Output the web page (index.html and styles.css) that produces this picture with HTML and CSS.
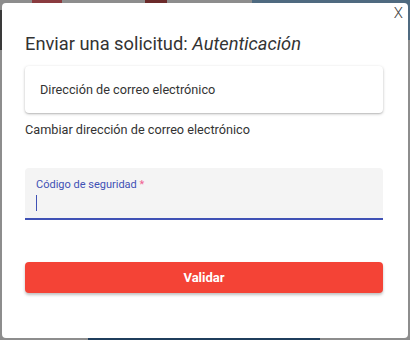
FILE: index.html
```html
<!DOCTYPE html>
<html lang="es">
<head>
<meta charset="utf-8">
<link rel="stylesheet" href="styles.css">
</head>
<body>
<div class="backdrop">
  <div class="bg-red"></div>
  <div class="bg-red2"></div>
  <div class="bg-blue"></div>
  <div class="bg-dark"></div>
  <div class="bg-bottom"></div>
</div>
<div class="modal">
  <button class="close">X</button>
  <h1 class="title">Enviar una solicitud: <em>Autenticación</em></h1>
  <div class="card">Dirección de correo electrónico</div>
  <a class="change">Cambiar dirección de correo electrónico</a>
  <div class="field">
    <label class="label">Código de seguridad <span class="req">*</span></label>
    <span class="caret"></span>
  </div>
  <button class="submit">Validar</button>
</div>
</body>
</html>
```
FILE: styles.css
```css
html, body { margin: 0; padding: 0; }
body {
  width: 410px;
  height: 340px;
  background: #8d8d8d;
  font-family: Roboto, "Liberation Sans", Arial, sans-serif;
  overflow: hidden;
  position: relative;
}
.backdrop { position: absolute; inset: 0; }
.bg-red { position: absolute; left: 32px; top: 0; width: 30px; height: 4px; background: #8a3b3f; }
.bg-red2 { position: absolute; left: 145px; top: 0; width: 22px; height: 4px; background: #6b2a2a; }
.bg-blue { position: absolute; left: 252px; top: 0; width: 158px; height: 40px; background: #4f6a80; }
.bg-dark { position: absolute; left: 0; top: 10px; width: 3px; height: 40px; background: #3a3a3a; }
.bg-bottom { position: absolute; left: 88px; top: 337px; width: 232px; height: 3px; background: #1f3d5c; }

.modal {
  position: relative;
  margin: 3px 0 0 2px;
  width: 406px;
  height: 335px;
  box-sizing: border-box;
  background: #fff;
  border-radius: 4px;
  padding: 30px 25px 0 23px;
  display: flex;
  flex-direction: column;
  color: #333;
}
.close {
  position: absolute;
  top: 2px;
  right: 5px;
  border: 0;
  background: none;
  padding: 0;
  font-family: Roboto, "Liberation Sans", sans-serif;
  font-size: 15px;
  font-weight: 300;
  color: #444;
  line-height: 16px;
}
.title {
  margin: 0;
  font-size: 18.3px;
  font-weight: 400;
  line-height: 22px;
  color: #333;
}
.title em { font-style: italic; }
.card {
  margin-top: 11px;
  height: 47px;
  box-sizing: border-box;
  border-radius: 4px;
  background: #fff;
  box-shadow: 0 1px 3px rgba(0,0,0,0.25), 0 1px 1px rgba(0,0,0,0.08);
  padding: 0 15px;
  display: flex;
  align-items: center;
  font-size: 12.7px;
  color: #333;
}
.change {
  margin-top: 9px;
  font-size: 12.7px;
  line-height: 16px;
  color: #333;
}
.field {
  margin-top: 30px;
  height: 52px;
  box-sizing: border-box;
  background: #f4f4f4;
  border-radius: 4px 4px 0 0;
  border-bottom: 2px solid #3f51b5;
  padding: 10px 11px 0;
  display: flex;
  flex-direction: column;
}
.label {
  font-size: 11px;
  line-height: 13px;
  color: #3f51b5;
}
.req { color: #f06292; }
.caret {
  margin-top: 4px;
  width: 1px;
  height: 16px;
  background: #3f51b5;
}
.submit {
  margin-top: 42px;
  height: 31px;
  border: 0;
  border-radius: 4px;
  background: #f44336;
  color: #fff;
  font-family: Roboto, "Liberation Sans", sans-serif;
  font-weight: 700;
  font-size: 13px;
  box-shadow: 0 2px 3px rgba(0,0,0,0.25);
}
```
